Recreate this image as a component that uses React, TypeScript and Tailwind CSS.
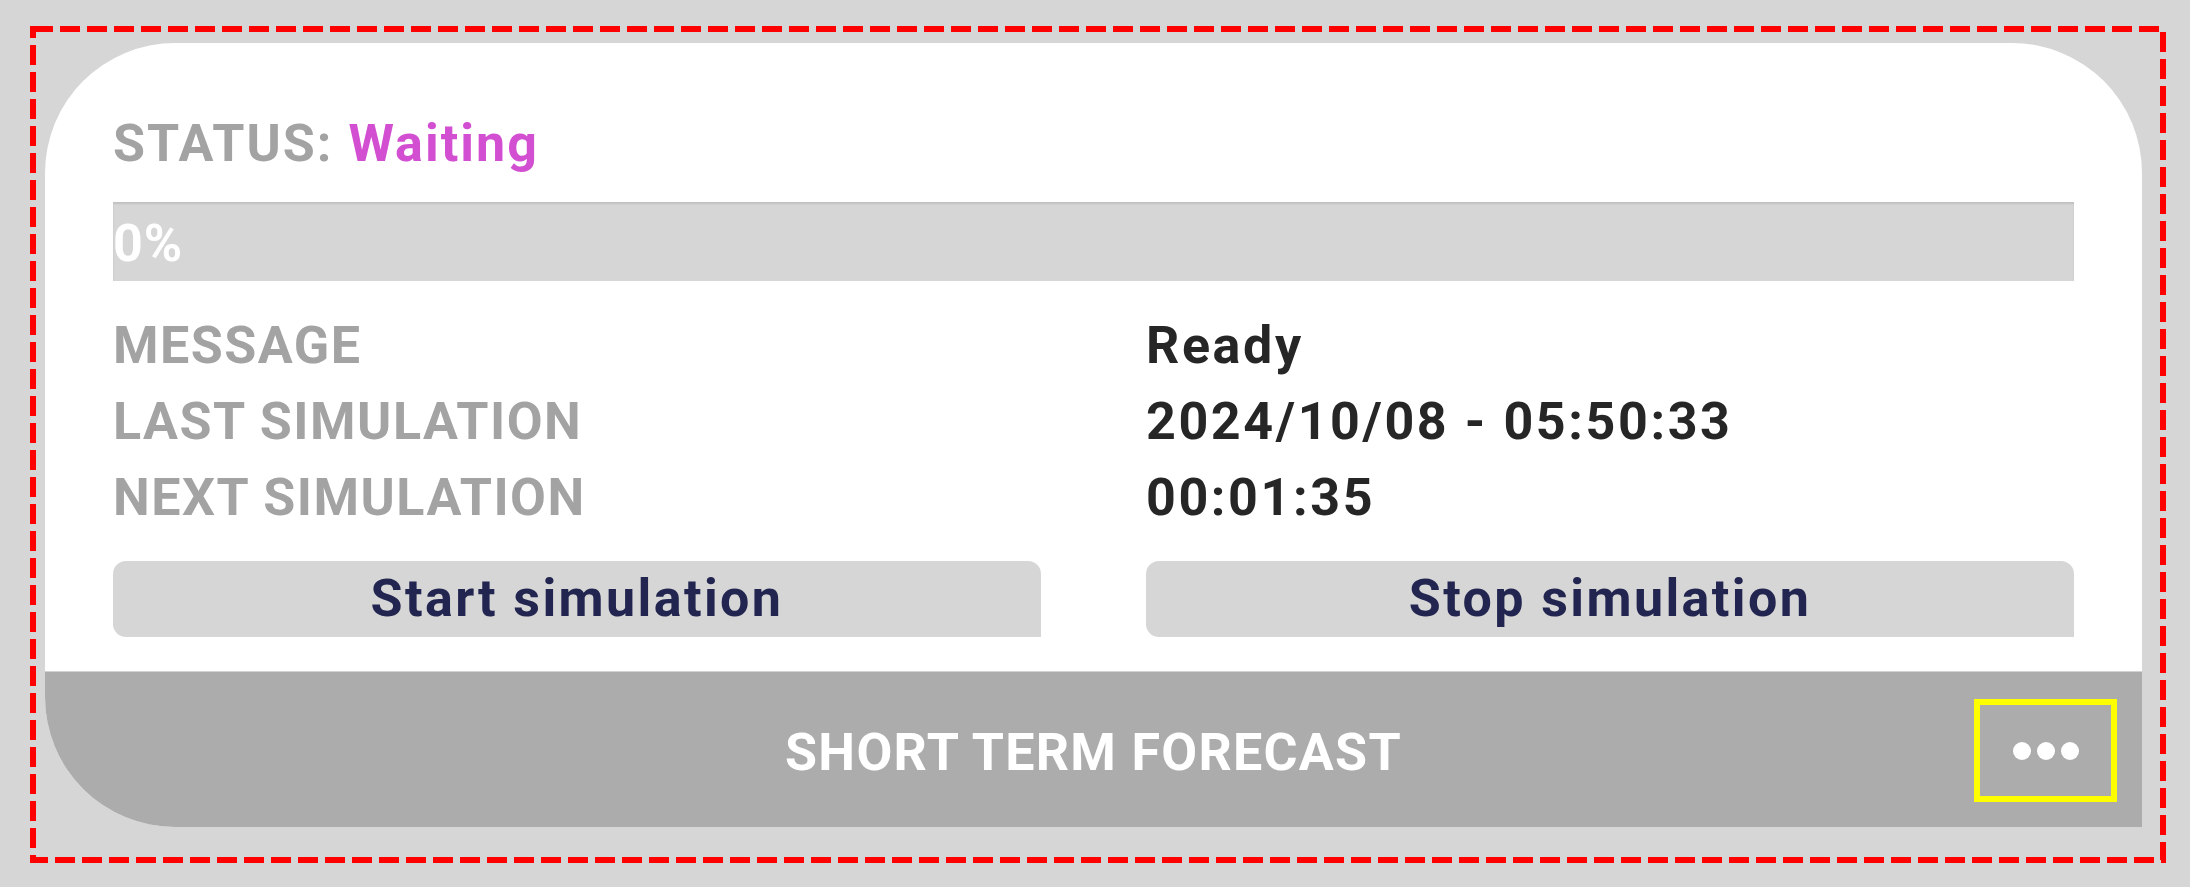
import { useState } from 'react'

type Row = { label: string; value: string }

const rows: Row[] = [
    { label: 'MESSAGE', value: 'Ready' },
    { label: 'LAST SIMULATION', value: '2024/10/08 - 05:50:33' },
    { label: 'NEXT SIMULATION', value: '00:01:35' },
]

const font = { fontFamily: "Roboto, 'Liberation Sans', sans-serif" }

export default function App() {
    const [progress] = useState(0)

    return (
        <div className="w-[2190px] h-[887px] bg-[#d6d6d6] pl-[30px] pt-[26px]" style={font}>
            {/* selection outline */}
            <div className="relative w-[2136px] h-[837px] pl-[15px] pt-[17px]">
                <svg className="absolute inset-0 pointer-events-none" width="2136" height="837">
                    <rect x="3" y="3" width="2130" height="831" fill="none" stroke="#ff0000" strokeWidth="6" strokeDasharray="20 7" />
                </svg>

                <div className="w-[2097px] h-[784px] flex flex-col bg-white rounded-tl-[130px] rounded-tr-[130px] rounded-bl-[130px] overflow-hidden">
                    {/* ── Body ─────────────────────────────────── */}
                    <div className="flex-1 px-[68px] pt-[63px] font-bold text-[52px] leading-[76px]">
                        <p className="text-[#a3a3a3] tracking-[2px]">
                            STATUS: <span className="text-[#d34fd1]">Waiting</span>
                        </p>

                        {/* Progress */}
                        <div className="mt-[20px] h-[79px] bg-[#d6d6d6] shadow-[inset_0_2px_2px_rgba(0,0,0,0.1)] relative">
                            <div className="h-full bg-[#8bc34a]" style={{ width: `${progress}%` }} />
                            <span className="absolute left-0 top-0 leading-[79px] pt-[2px] text-white tracking-[1px]">{progress}%</span>
                        </div>

                        <div className="mt-[27px] grid grid-cols-2 gap-x-[105px]">
                            {rows.map((r) => (
                                <div key={r.label} className="contents">
                                    <span className="text-[#a3a3a3] tracking-[1.5px]">{r.label}</span>
                                    <span className="text-[#262626] tracking-[2.6px]">{r.value}</span>
                                </div>
                            ))}
                        </div>

                        <div className="mt-[25px] grid grid-cols-2 gap-x-[105px]">
                            <button className="h-[76px] bg-[#d6d6d6] text-[#22254f] rounded-tl-[13px] rounded-tr-[13px] rounded-bl-[13px] font-bold tracking-[2.4px]">
                                Start simulation
                            </button>
                            <button className="h-[76px] bg-[#d6d6d6] text-[#22254f] rounded-tl-[13px] rounded-tr-[13px] rounded-bl-[13px] font-bold tracking-[2.4px]">
                                Stop simulation
                            </button>
                        </div>
                    </div>

                    {/* ── Footer ───────────────────────────────── */}
                    <div className="relative shrink-0 h-[156px] bg-[#acacac] border-t border-[#d2d2d2] flex items-center justify-center pt-[6px]">
                        <span className="text-white font-bold text-[52px] leading-[76px] tracking-[1.3px]">SHORT TERM FORECAST</span>
                        <button className="absolute right-[25px] top-[27px] w-[143px] h-[103px] border-[6px] border-[#ffff00] flex items-center justify-center gap-[6px]">
                            <span className="w-[18px] h-[18px] rounded-full bg-white" />
                            <span className="w-[18px] h-[18px] rounded-full bg-white" />
                            <span className="w-[18px] h-[18px] rounded-full bg-white" />
                        </button>
                    </div>
                </div>
            </div>
        </div>
    )
}
